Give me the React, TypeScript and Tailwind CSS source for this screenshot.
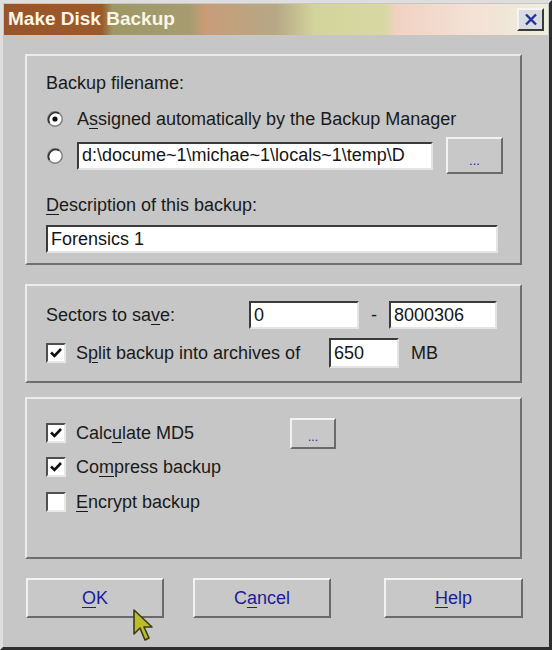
import React from "react";

const font = { fontFamily: '"Liberation Sans", Arial, sans-serif' };

function U({ children }: { children: React.ReactNode }) {
  return <span className="underline underline-offset-[3px] decoration-1">{children}</span>;
}

function Radio({ checked }: { checked?: boolean }) {
  return (
    <svg width="16" height="16" viewBox="0 0 16 16" className="shrink-0">
      <circle cx="8" cy="8" r="7.2" fill="#ffffff" stroke="#7a7a7a" strokeWidth="1.4" />
      <path d="M2.5 12 A7 7 0 0 1 12 2.5" fill="none" stroke="#303030" strokeWidth="1.6" />
      {checked && <circle cx="8" cy="8" r="2.6" fill="#101010" />}
    </svg>
  );
}

function Check({ checked }: { checked?: boolean }) {
  return (
    <div className="w-[20px] h-[20px] shrink-0 bg-white border-2 border-t-[#505050] border-l-[#505050] border-r-[#e8e8e8] border-b-[#e8e8e8] flex items-center justify-center">
      {checked && (
        <svg width="14" height="14" viewBox="0 0 14 14">
          <path d="M2 6.5 L5.5 10 L12 3" fill="none" stroke="#101010" strokeWidth="2.6" />
        </svg>
      )}
    </div>
  );
}

function Field({ value, className }: { value: string; className: string }) {
  return (
    <div
      className={
        "bg-white border-2 border-t-[#3a3a3a] border-l-[#3a3a3a] border-r-[#e4e4e4] border-b-[#e4e4e4] flex items-center pl-[3px] overflow-hidden whitespace-nowrap text-[18px] text-[#151515] " +
        className
      }
    >
      {value}
    </div>
  );
}

function Btn({ children, className }: { children: React.ReactNode; className: string }) {
  return (
    <div
      className={
        "bg-[#c8c8c8] border-2 border-t-[#f2f2f2] border-l-[#f2f2f2] border-r-[#6a6a6a] border-b-[#6a6a6a] flex items-center justify-center text-[18px] text-[#1c1c9c] " +
        className
      }
    >
      {children}
    </div>
  );
}

export default function App() {
  return (
    <div
      style={font}
      className="w-[552px] h-[650px] bg-[#c6c6c6] border-[3px] border-t-[#dedede] border-l-[#dedede] border-r-[#2e2e2e] border-b-[#2e2e2e] flex flex-col relative text-[#1a1a1a]"
    >
      {/* title bar */}
      <div className="mx-[1px] mt-[1px] h-[31px] flex items-center justify-between pl-[4px] pr-[4px] bg-[linear-gradient(90deg,#98552a_0%,#9c5a2c_18%,#9d9866_20%,#a69c70_34%,#c99c78_37%,#b6a886_50%,#d3d39c_57%,#d8d8a2_70%,#f1d2c2_72%,#f3e0d4_85%,#eeeedc_100%)]">
        <span className="text-[19px] font-bold text-[#fbf6e6]">Make Disk Backup</span>
        <div className="w-[27px] h-[23px] bg-[#d8dbe0] border-2 border-t-[#f4f4f4] border-l-[#f4f4f4] border-r-[#3a3a3a] border-b-[#3a3a3a] flex items-center justify-center">
          <svg width="14" height="13" viewBox="0 0 14 13">
            <path d="M2 1.5 L12 11.5 M12 1.5 L2 11.5" stroke="#22309c" strokeWidth="2.4" />
          </svg>
        </div>
      </div>

      {/* group 1 */}
      <div className="mt-[19px] ml-[22px] w-[497px] h-[211px] border-2 border-t-[#ebebeb] border-l-[#ebebeb] border-r-[#707070] border-b-[#707070] flex flex-col pl-[19px] pt-[16px] text-[18px]">
        <div className="h-[22px] flex items-center">Backup filename:</div>
        <div className="mt-[14px] h-[22px] flex items-center gap-[14px] pl-[1px]">
          <Radio checked />
          <span>
            A<U>s</U>signed automatically by the Backup Manager
          </span>
        </div>
        <div className="mt-[7px] h-[37px] flex items-center pl-[1px]">
          <Radio />
          <Field value="d:\docume~1\michae~1\locals~1\temp\D" className="ml-[14px] w-[356px] h-[28px]" />
          <Btn className="ml-[13px] w-[57px] h-[37px]">
            <span className="text-[13px] leading-none -mb-[10px]">...</span>
          </Btn>
        </div>
        <div className="mt-[20px] h-[22px] flex items-center">
          <span>
            <U>D</U>escription of this backup:
          </span>
        </div>
        <Field value="Forensics 1" className="mt-[9px] w-[452px] h-[28px]" />
      </div>

      {/* group 2 */}
      <div className="mt-[19px] ml-[22px] w-[497px] h-[99px] border-2 border-t-[#ebebeb] border-l-[#ebebeb] border-r-[#707070] border-b-[#707070] flex flex-col pl-[19px] pt-[15px] text-[18px]">
        <div className="h-[28px] flex items-center">
          <span className="w-[203px]">
            Sectors to sa<U>v</U>e:
          </span>
          <Field value="0" className="w-[110px] h-[28px]" />
          <span className="w-[30px] text-center">-</span>
          <Field value="8000306" className="w-[108px] h-[28px]" />
        </div>
        <div className="mt-[9px] h-[30px] flex items-center">
          <Check checked />
          <span className="ml-[10px] w-[253px]">
            S<U>p</U>lit backup into archives of
          </span>
          <Field value="650" className="w-[70px] h-[30px]" />
          <span className="ml-[12px]">MB</span>
        </div>
      </div>

      {/* group 3 */}
      <div className="mt-[14px] ml-[22px] w-[497px] h-[162px] border-2 border-t-[#ebebeb] border-l-[#ebebeb] border-r-[#707070] border-b-[#707070] flex flex-col pl-[19px] pt-[19px] text-[18px]">
        <div className="h-[30px] flex items-center">
          <Check checked />
          <span className="ml-[10px] w-[214px]">
            Calc<U>u</U>late MD5
          </span>
          <Btn className="w-[46px] h-[31px]">
            <span className="text-[12px] leading-none -mb-[8px]">...</span>
          </Btn>
        </div>
        <div className="mt-[4px] h-[30px] flex items-center">
          <Check checked />
          <span className="ml-[10px]">
            Co<U>m</U>press backup
          </span>
        </div>
        <div className="mt-[5px] h-[30px] flex items-center">
          <Check />
          <span className="ml-[10px]">
            <U>E</U>ncrypt backup
          </span>
        </div>
      </div>

      {/* buttons */}
      <div className="mt-[19px] ml-[23px] flex">
        <Btn className="w-[138px] h-[40px]">
          <span>
            <U>O</U>K
          </span>
        </Btn>
        <Btn className="ml-[29px] w-[138px] h-[40px]">
          <span>
            C<U>a</U>ncel
          </span>
        </Btn>
        <Btn className="ml-[53px] w-[139px] h-[40px]">
          <span>
            <U>H</U>elp
          </span>
        </Btn>
      </div>

      {/* mouse cursor */}
      <svg className="absolute left-[128px] top-[605px]" width="26" height="38" viewBox="0 0 26 38">
        <path
          d="M3 2 L3 26 L9 20 L14 32 L18 30 L13 19 L21 19 Z"
          fill="#bcbc2c"
          stroke="#3c3c14"
          strokeWidth="1.6"
          strokeLinejoin="round"
        />
      </svg>
    </div>
  );
}
